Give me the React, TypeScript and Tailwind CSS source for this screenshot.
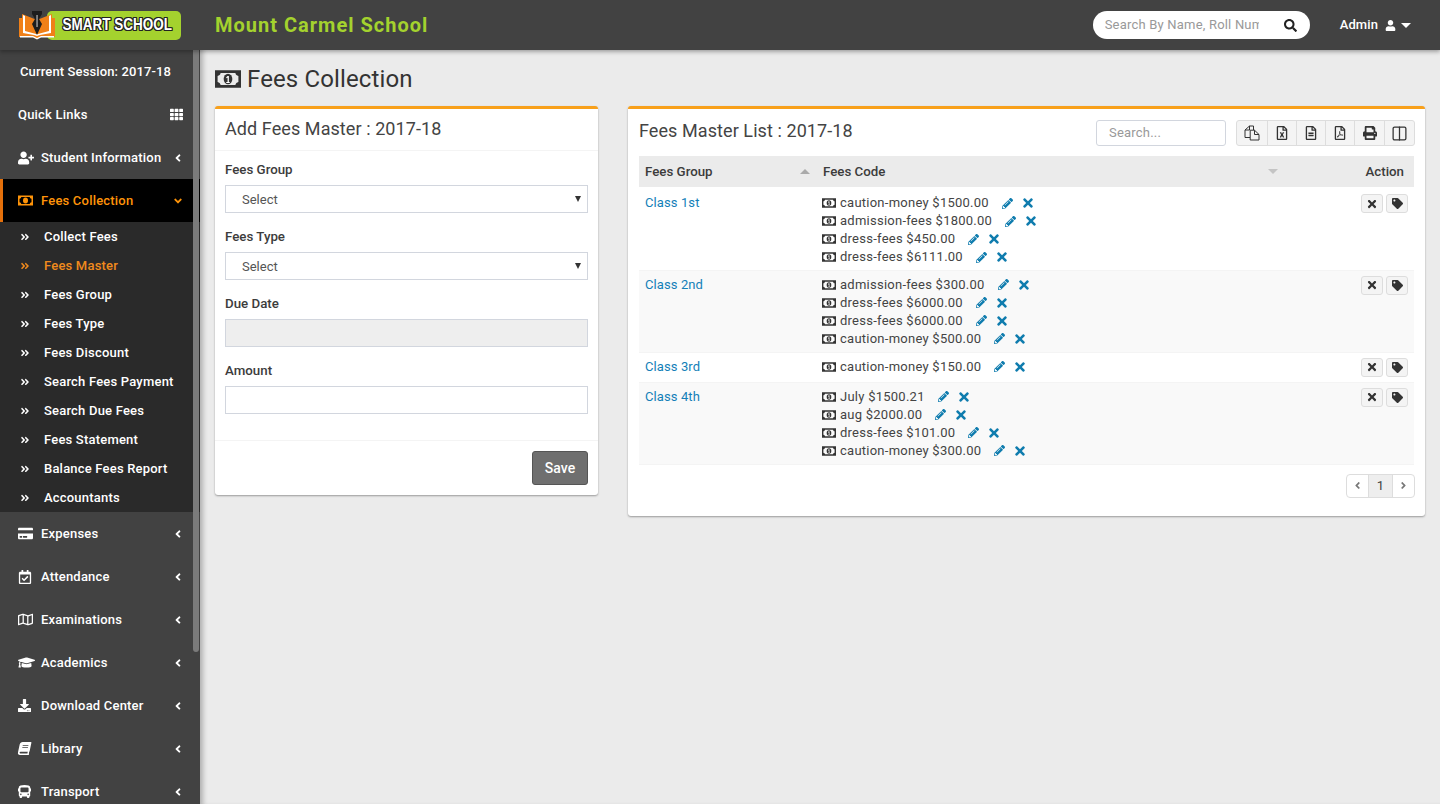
import type { ReactNode } from 'react';
import { Columns2 } from 'lucide-react';
import {
  FaAngleDoubleRight,
  FaAngleDown,
  FaAngleLeft,
  FaAngleRight,
  FaBook,
  FaBus,
  FaCreditCard,
  FaDownload,
  FaGraduationCap,
  FaPencilAlt,
  FaPrint,
  FaRegCalendarCheck,
  FaRegFileAlt,
  FaRegFileExcel,
  FaRegFilePdf,
  FaRegMap,
  FaSearch,
  FaTag,
  FaTh,
  FaTimes,
  FaUser,
  FaUserPlus,
} from 'react-icons/fa';

const subMenu = [
  'Collect Fees',
  'Fees Master',
  'Fees Group',
  'Fees Type',
  'Fees Discount',
  'Search Fees Payment',
  'Search Due Fees',
  'Fees Statement',
  'Balance Fees Report',
  'Accountants',
];

const lowerMenu = [
  { label: 'Expenses', icon: <FaCreditCard size={15} /> },
  { label: 'Attendance', icon: <FaRegCalendarCheck size={14} /> },
  { label: 'Examinations', icon: <FaRegMap size={15} /> },
  { label: 'Academics', icon: <FaGraduationCap size={17} /> },
  { label: 'Download Center', icon: <FaDownload size={13} /> },
  { label: 'Library', icon: <FaBook size={13} className="[transform:skewX(-12deg)]" /> },
  { label: 'Transport', icon: <FaBus size={13} /> },
];

const rows = [
  {
    group: 'Class 1st',
    height: 'h-[82px]',
    bg: 'bg-white',
    fees: ['caution-money $1500.00', 'admission-fees $1800.00', 'dress-fees $450.00', 'dress-fees $6111.00'],
  },
  {
    group: 'Class 2nd',
    height: 'h-[82px]',
    bg: 'bg-[#f9f9f9]',
    fees: ['admission-fees $300.00', 'dress-fees $6000.00', 'dress-fees $6000.00', 'caution-money $500.00'],
  },
  {
    group: 'Class 3rd',
    height: 'h-[30px]',
    bg: 'bg-white',
    fees: ['caution-money $150.00'],
  },
  {
    group: 'Class 4th',
    height: 'h-[82px]',
    bg: 'bg-[#f9f9f9]',
    fees: ['July $1500.21', 'aug $2000.00', 'dress-fees $101.00', 'caution-money $300.00'],
  },
];

// fa-money from the old icon font is heavier than the FA5 glyph, so drawn by hand
function MoneyIcon({ width, height, className }: { width: number; height: number; className?: string }) {
  return (
    <svg width={width} height={height} viewBox="0 0 30 20" className={className} aria-hidden="true">
      <path
        fillRule="evenodd"
        fill="currentColor"
        d="M0 0h30v20H0zM6.500 3C6 5 5 6 3 6.500v7C5 14 6 15 6.500 17h17c.5-2 1.500-3 3.500-3.500v-7C25 6 24 5 23.500 3z"
      />
      <ellipse cx="15" cy="10" rx="5" ry="6" fill="currentColor" />
      <path d="M14.500 6.500h1.500v7h1v1h-4v-1h1.500V8.500l-1.500.7V8z" fill="var(--money-mark, #fff)" />
    </svg>
  );
}

function CopyIcon() {
  return (
    <svg width="16" height="16" viewBox="0 0 16 16" fill="none" stroke="currentColor" strokeWidth="1" aria-hidden="true">
      <path d="M9.500 5V1H5.500L1 5v7.500h5" />
      <path d="M5.500 1v4H1" />
      <path d="M6.200 5.200h4.300L15 9.500v5.500H6.200z" />
      <path d="M10.500 5.200v4.300H15" />
    </svg>
  );
}

function Logo() {
  return (
    <div className="relative ml-[19px] h-[29px] w-[162px]">
      <div className="absolute top-0 right-0 bottom-0 left-[28px] flex items-center justify-end rounded-[5px] bg-[#a4d22e] pr-[9px]">
        <span className="font-['Liberation_Sans',sans-serif] text-[13.500px] leading-none font-bold text-white [transform:scaleY(1.25)] [text-shadow:-1px_0_#222,1px_0_#222,0_-1px_#222,0_1px_#222,-1px_-1px_#222,1px_1px_#222,1px_-1px_#222,-1px_1px_#222]">
          SMART SCHOOL
        </span>
      </div>
      <svg className="absolute top-0 left-0" width="37" height="29" viewBox="0 0 37 29">
        <path d="M0 7h3V3l15 6 15-6v4h3v19H21l-3 2-3-2H0z" fill="#f08018" />
        <path d="M1 25h13l4 2 4-2h13v1.500H22l-4 2-4-2H1z" fill="#fff" />
        <path d="M4 4v18l11 2 3 1 3-1 11-2V4l-2 1v15l-11 3h-2L6 20V5z" fill="#fff" />
        <path d="M13 0h10v3l-3 5 3 5-5 11-5-11 3-5-3-5z" fill="#1d1d1d" />
        <path d="M17.300 4h1.500v12h-1.500z" fill="#9a9a9a" />
      </svg>
    </div>
  );
}

function SideRow({ icon, label }: { icon: ReactNode; label: string }) {
  return (
    <div className="flex h-[43px] shrink-0 items-center pr-[16px] pl-[18px] text-white">
      <span className="flex w-[23px] shrink-0 items-center">{icon}</span>
      <span className="flex-1">{label}</span>
      <FaAngleLeft size={12} />
    </div>
  );
}

function Sidebar() {
  return (
    <aside className="relative h-[754px] w-[200px] shrink-0 overflow-hidden bg-[#424242] text-[13px] leading-[18px] font-medium tracking-[0.2px]">
      <div className="flex h-[43px] items-center pl-[20px] tracking-[0.125px] text-white">Current Session: 2017-18</div>
      <div className="flex h-[43px] items-center justify-between pr-[17px] pl-[18px] text-white">
        Quick Links
        <FaTh size={13} />
      </div>
      <SideRow icon={<FaUserPlus size={16} />} label="Student Information" />
      <div className="flex h-[43px] items-center border-l-[3px] border-[#e4700b] bg-black pr-[16px] pl-[15px] text-[#ff9409]">
        <span className="flex w-[23px] shrink-0 items-center [--money-mark:#ff9409]">
          <MoneyIcon width={15} height={11} />
        </span>
        <span className="flex-1">Fees Collection</span>
        <FaAngleDown size={12} />
      </div>
      <div className="bg-[#2a2a2a] pl-[1px]">
        {subMenu.map((item) => (
          <div
            key={item}
            className={`flex h-[29px] items-center pl-[19px] ${item === 'Fees Master' ? 'text-[#f08a1d]' : 'text-white'}`}
          >
            <span className="flex w-[24px] shrink-0 items-center">
              <FaAngleDoubleRight size={10} />
            </span>
            {item}
          </div>
        ))}
      </div>
      {lowerMenu.map((m) => (
        <SideRow key={m.label} icon={m.icon} label={m.label} />
      ))}
      {/* scrollbar thumb */}
      <div className="absolute top-0 right-[1px] h-[602px] w-[6px] rounded-b-[3px] bg-[#7b7b7b]" />
    </aside>
  );
}

function CardTitle({ children }: { children: ReactNode }) {
  return <h3 className="text-[18px] leading-[20px] tracking-[0.08px] text-[#444]">{children}</h3>;
}

function Field({ label, children }: { label: string; children: ReactNode }) {
  return (
    <div className="mb-[14px]">
      <label className="mb-[5px] block text-[13.300px] leading-[20px] font-medium text-[#3c3c3c]">{label}</label>
      {children}
    </div>
  );
}

function SelectBox() {
  return (
    <div className="flex h-[28px] items-center justify-between border border-[#d2d6de] bg-white pt-[2px] pr-[6px] pl-[16px] text-[13px] text-[#555]">
      Select
      <span className="mb-[2px] h-0 w-0 border-x-[3.500px] border-t-[6px] border-x-transparent border-t-[#333]" />
    </div>
  );
}

function AddForm() {
  return (
    <section className="h-[389px] w-[383px] shrink-0 rounded-[3px] border-t-[3px] border-[#f8a01a] bg-white shadow-[0_1px_2px_rgba(0,0,0,0.35)]">
      <div className="flex h-[42px] items-center border-b border-[#f4f4f4] px-[10px] pb-[1px]">
        <CardTitle>Add Fees Master : 2017-18</CardTitle>
      </div>
      <div className="h-[290px] border-b border-[#f4f4f4] px-[10px] pt-[9px]">
        <Field label="Fees Group">
          <SelectBox />
        </Field>
        <Field label="Fees Type">
          <SelectBox />
        </Field>
        <Field label="Due Date">
          <div className="h-[28px] border border-[#d2d6de] bg-[#eeeeee]" />
        </Field>
        <Field label="Amount">
          <div className="h-[28px] border border-[#d2d6de] bg-white" />
        </Field>
      </div>
      <div className="flex justify-end px-[10px] pt-[10px]">
        <button className="h-[34px] w-[56px] rounded-[3px] border border-[#555] bg-[#6f6f6f] text-[14px] font-medium text-white">
          Save
        </button>
      </div>
    </section>
  );
}

function FeeLine({ text }: { text: string }) {
  return (
    <div className="flex h-[18px] items-center text-[13px] text-[#444]">
      <MoneyIcon width={14} height={10} className="mr-[4px] text-[#333]" />
      <span className="tracking-[0.25px]">{text}</span>
      <FaPencilAlt size={11} className="ml-[13px] text-[#0f7cae]" />
      <FaTimes size={14} className="ml-[8px] text-[#0f7cae]" />
    </div>
  );
}

function ActionBtn({ children }: { children: ReactNode }) {
  return (
    <span className="flex h-[19px] w-[22px] items-center justify-center rounded-[3px] border border-[#ddd] bg-[#f4f4f4] text-[#333]">
      {children}
    </span>
  );
}

const toolbar = [
  { key: 'copy', width: 'w-[31px]', icon: <CopyIcon /> },
  { key: 'excel', width: 'w-[29px]', icon: <FaRegFileExcel size={14} /> },
  { key: 'csv', width: 'w-[29px]', icon: <FaRegFileAlt size={14} /> },
  { key: 'pdf', width: 'w-[29px]', icon: <FaRegFilePdf size={14} /> },
  { key: 'print', width: 'w-[30px]', icon: <FaPrint size={14} /> },
  { key: 'columns', width: 'w-[29px]', icon: <Columns2 size={17} strokeWidth={1.8} /> },
];

function FeeList() {
  return (
    <section className="h-[410px] flex-1 rounded-[3px] border-t-[3px] border-[#f8a01a] bg-white px-[11px] shadow-[0_1px_2px_rgba(0,0,0,0.35)]">
      <div className="flex h-[47px] items-center justify-between">
        <div className="pb-[3px]">
          <CardTitle>Fees Master List : 2017-18</CardTitle>
        </div>
        <div className="mr-[-1px] flex items-center pt-[1px]">
          <div className="mr-[10px] flex h-[26px] w-[130px] items-center rounded-[3px] border border-[#d2d6de] pl-[12px] text-[13px] tracking-[0.2px] text-[#999]">
            Search...
          </div>
          <div className="flex h-[26px] overflow-hidden rounded-[3px] border border-[#ddd] bg-[#f4f4f4] text-[#333]">
            {toolbar.map((t) => (
              <span
                key={t.key}
                className={`flex h-full items-center justify-center border-r border-[#ddd] last:border-r-0 ${t.width}`}
              >
                {t.icon}
              </span>
            ))}
          </div>
        </div>
      </div>
      <table className="w-[775px] table-fixed border-collapse text-[13px] text-[#444]">
        <thead>
          <tr className="h-[32px] border-b-2 border-white bg-[#ebebeb] text-[13.300px] text-[#3c3c3c]">
            <th className="w-[178px] pr-[7px] pl-[6px] text-left font-medium">
              <span className="flex items-center justify-between">
                Fees Group
                <span className="h-0 w-0 border-x-[5px] border-b-[5px] border-x-transparent border-b-[#aaa]" />
              </span>
            </th>
            <th className="w-[469px] pr-[8px] pl-[6px] text-left font-medium">
              <span className="flex items-center justify-between">
                Fees Code
                <span className="h-0 w-0 border-x-[5px] border-t-[5px] border-x-transparent border-t-[#c4c4c4]" />
              </span>
            </th>
            <th className="pr-[10px] text-right font-medium">Action</th>
          </tr>
        </thead>
        <tbody>
          {rows.map((row) => (
            <tr key={row.group} className={`${row.height} ${row.bg} border-b border-[#f4f4f4] align-top`}>
              <td className="pt-[5px] pl-[6px] leading-[18px] tracking-[0.1px] text-[#1480b8]">{row.group}</td>
              <td className="pt-[5px] pl-[5px]">
                {row.fees.map((fee, i) => (
                  <FeeLine key={i} text={fee} />
                ))}
              </td>
              <td className="pt-[5px] pr-[6px]">
                <div className="flex justify-end gap-[3px]">
                  <ActionBtn>
                    <FaTimes size={12} />
                  </ActionBtn>
                  <ActionBtn>
                    <FaTag size={11} />
                  </ActionBtn>
                </div>
              </td>
            </tr>
          ))}
        </tbody>
      </table>
      <div className="mt-[9px] flex justify-end">
        <div className="mr-[-1px] flex h-[24px] overflow-hidden rounded-[4px] border border-[#ddd] text-[13px] text-[#444]">
          <span className="flex w-[22px] items-center justify-center border-r border-[#ddd] text-[#777]">
            <FaAngleLeft size={11} />
          </span>
          <span className="flex w-[24px] items-center justify-center border-r border-[#ddd] bg-[#eeeeee]">1</span>
          <span className="flex w-[21px] items-center justify-center text-[#777]">
            <FaAngleRight size={11} />
          </span>
        </div>
      </div>
    </section>
  );
}

export default function App() {
  return (
    <div className="flex h-[804px] w-[1440px] flex-col overflow-hidden bg-[#ebebeb] font-['Roboto',sans-serif]">
      <header className="relative z-10 flex h-[50px] shrink-0 items-center bg-[#424242] shadow-[0_2px_4px_rgba(0,0,0,0.3)]">
        <Logo />
        <div className="ml-[34px] flex-1 text-[20px] font-bold tracking-[1px] text-[#a4d22e]">Mount Carmel School</div>
        <div className="mr-[30px] flex h-[28px] w-[217px] items-center justify-between rounded-full bg-white pr-[13px] pl-[12px] text-[13px] tracking-[0.2px] text-[#999]">
          <span className="w-[154px] overflow-hidden whitespace-nowrap">Search By Name, Roll Number</span>
          <FaSearch size={13} className="text-[#222]" />
        </div>
        <div className="mr-[29px] flex items-center text-[13px] font-medium tracking-[0.1px] text-white">
          Admin
          <FaUser size={11} className="ml-[7px]" />
          <span className="ml-[5px] h-0 w-0 border-x-[5px] border-t-[5px] border-x-transparent border-t-white" />
        </div>
      </header>
      <div className="flex flex-1">
        <Sidebar />
        <main className="min-w-0 flex-1 px-[15px] shadow-[inset_6px_0_5px_-3px_rgba(0,0,0,0.25)]">
          <h1 className="flex h-[56px] items-center pt-[2px] text-[24px] font-normal tracking-[0.13px] text-[#333]">
            <MoneyIcon width={26} height={18} className="mr-[6px]" />
            Fees Collection
          </h1>
          <div className="flex items-start gap-[30px]">
            <AddForm />
            <FeeList />
          </div>
        </main>
      </div>
    </div>
  );
}
